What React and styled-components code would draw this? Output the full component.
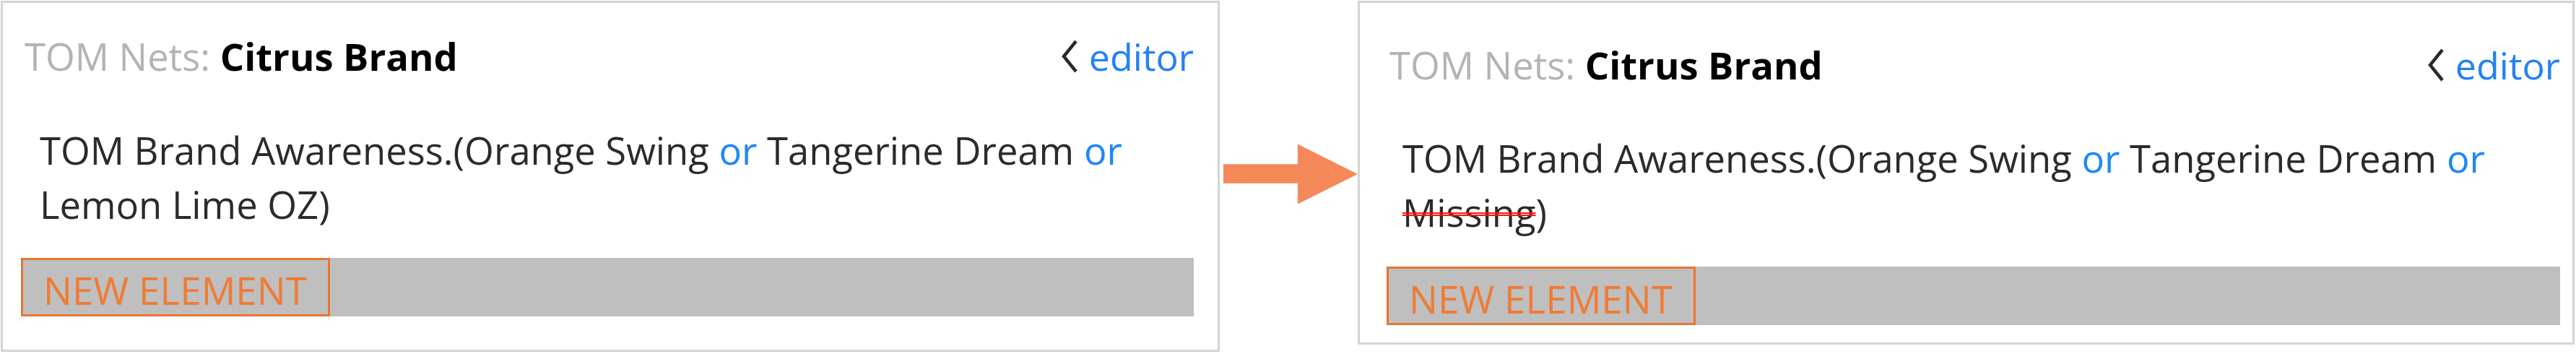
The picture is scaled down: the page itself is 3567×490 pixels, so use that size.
import React from "react";
import styled, { createGlobalStyle } from "styled-components";

const GlobalStyle = createGlobalStyle`
  body {
    margin: 0;
    background: #fff;
    font-family: "Open Sans", "Noto Sans", sans-serif;
  }
`;

const Page = styled.div`
  display: flex;
  align-items: flex-start;
  padding: 1px 0 0 1px;
`;

const Card = styled.div`
  box-sizing: border-box;
  width: ${(p) => p.$width}px;
  height: ${(p) => p.$height}px;
  padding: ${(p) => p.$pad};
  border: 3px solid #d4d4d4;
  background: #fff;
  display: flex;
  flex-direction: column;
  flex-shrink: 0;
`;

const Header = styled.div`
  display: flex;
  justify-content: space-between;
  align-items: center;
  height: 60px;
  padding-left: ${(p) => p.$indent}px;
`;

const Title = styled.div`
  font-size: 52.5px;
  line-height: 60px;
  white-space: nowrap;
`;

const Label = styled.span`
  color: #b4b4b4;
`;

const Name = styled.span`
  color: #000;
  font-weight: 700;
`;

const EditorLink = styled.a`
  display: flex;
  align-items: center;
  gap: 14px;
  font-size: 52px;
  line-height: 60px;
  color: #2481f5;
  text-decoration: none;
  cursor: pointer;
`;

const Body = styled.p`
  margin: ${(p) => p.$gap}px 0 0 0;
  padding-left: ${(p) => p.$indent}px;
  font-size: 52.5px;
  line-height: 75px;
  color: #2b2b2b;
`;

const Or = styled.span`
  color: #1e88f8;
`;

const Struck = styled.span`
  text-decoration: line-through double #ff1010;
  text-decoration-thickness: 2px;
`;

const Bar = styled.div`
  margin-top: ${(p) => p.$gap}px;
  height: 81px;
  background: #bfbfbf;
  display: flex;
  flex-shrink: 0;
`;

const NewElement = styled.div`
  box-sizing: border-box;
  width: 428px;
  height: 81px;
  border: 3px solid #ea7430;
  padding: 8px 0 0 28px;
  display: flex;
  align-items: center;
  font-size: 53px;
  color: #ef7b35;
  white-space: nowrap;
`;

const ArrowWrap = styled.div`
  width: 191px;
  margin-top: 197px;
  padding-left: 5px;
  box-sizing: border-box;
  flex-shrink: 0;
  display: flex;
`;

const Chevron = () => (
  <svg width="26" height="46" viewBox="0 0 26 46">
    <polyline
      points="22,2 5,23 22,44"
      fill="none"
      stroke="#2a2a2a"
      strokeWidth="4.5"
    />
  </svg>
);

const Arrow = () => (
  <svg width="188" height="86" viewBox="0 0 188 86">
    <polygon
      points="0,29 104,29 104,1 188,43 104,85 104,56 0,56"
      fill="#f5895a"
    />
  </svg>
);

const NetCard = ({ width, height, pad, titleIndent, bodyIndent, gaps, last }) => (
  <Card $width={width} $height={height} $pad={pad}>
    <Header $indent={titleIndent}>
      <Title>
        <Label>TOM Nets: </Label>
        <Name>Citrus Brand</Name>
      </Title>
      <EditorLink>
        <Chevron />
        editor
      </EditorLink>
    </Header>
    <Body $gap={gaps[0]} $indent={bodyIndent}>
      TOM Brand Awareness.(Orange Swing <Or>or</Or> Tangerine Dream <Or>or</Or>{" "}
      {last})
    </Body>
    <Bar $gap={gaps[1]}>
      <NewElement>NEW ELEMENT</NewElement>
    </Bar>
  </Card>
);

export default function App() {
  return (
    <>
      <GlobalStyle />
      <Page>
        <NetCard
          width={1688}
          height={486}
          pad="44px 33px 44px 25px"
          titleIndent={5}
          bodyIndent={26}
          gaps={[62, 37]}
          last="Lemon Lime OZ"
        />
        <ArrowWrap>
          <Arrow />
        </ArrowWrap>
        <NetCard
          width={1685}
          height={476}
          pad="56px 17px 21px 37px"
          titleIndent={4}
          bodyIndent={22}
          gaps={[61, 38]}
          last={<Struck>Missing</Struck>}
        />
      </Page>
    </>
  );
}
